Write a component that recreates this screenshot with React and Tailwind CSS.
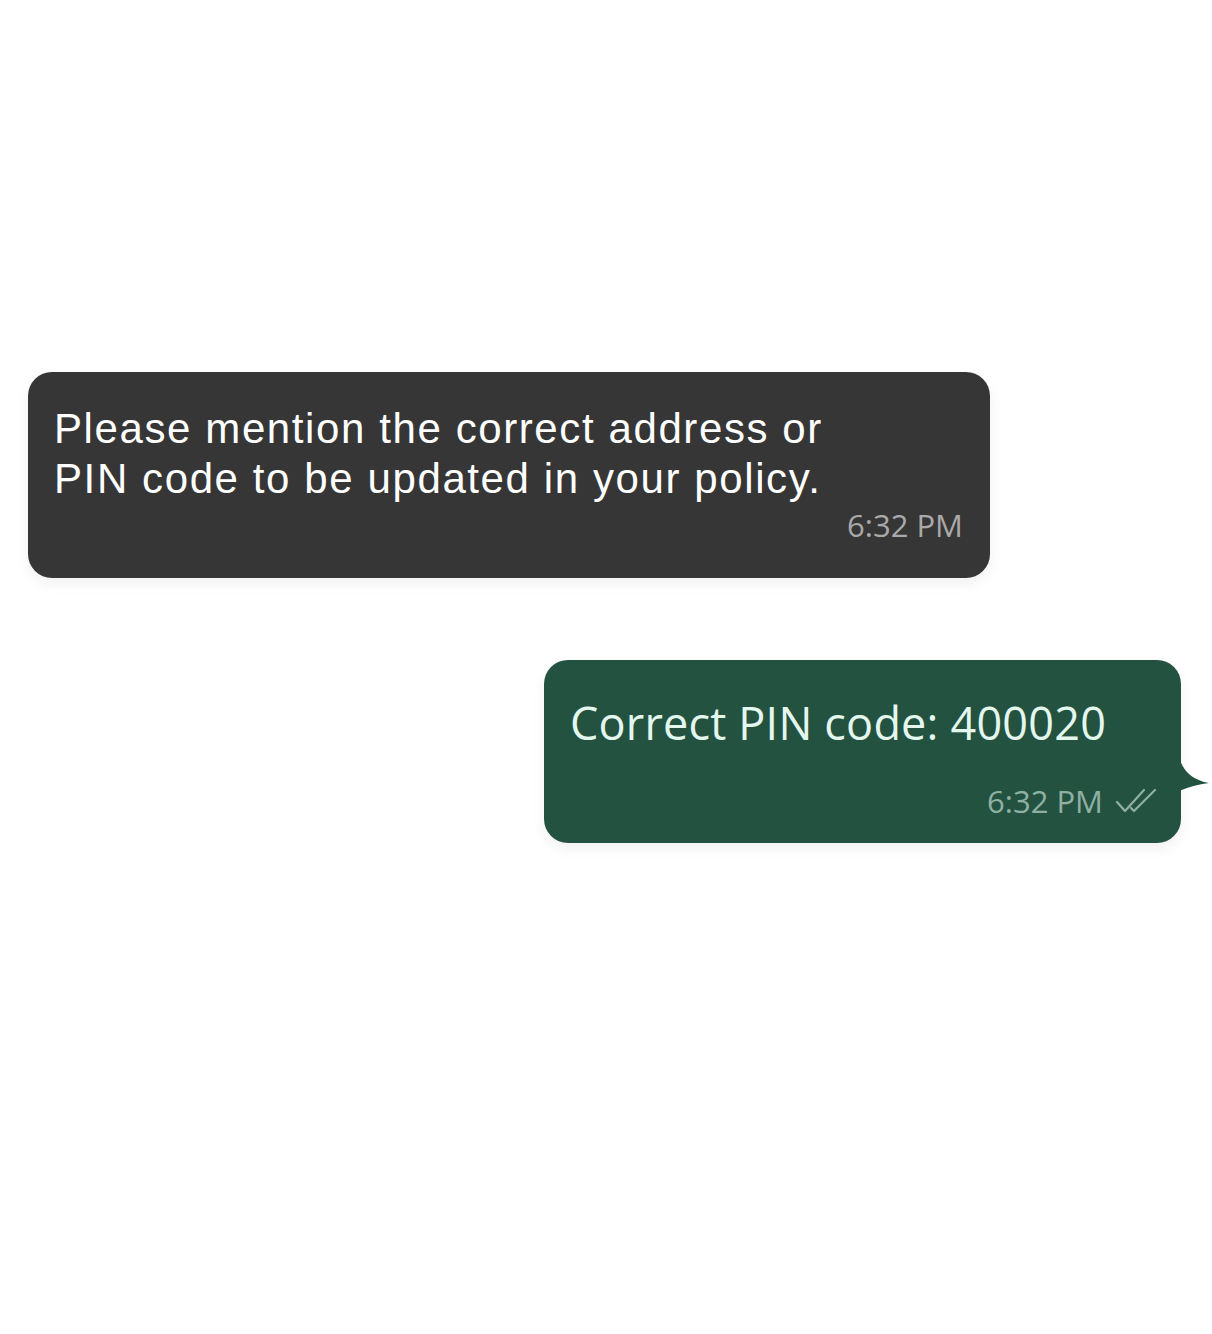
export default function App() {
  return (
    <div className="min-h-[1334px] w-full bg-white flex flex-col pt-[372px]">
      <div className="ml-[28px] w-[962px] rounded-[24px] bg-[#363636] pl-[26px] pr-[27px] pt-[32px] pb-[33px] shadow-[0_6px_14px_rgba(0,0,0,0.06)]">
        <p className="text-[42px] leading-[50px] tracking-[1.6px] text-white font-['Liberation_Sans',Arial,sans-serif]">
          Please mention the correct address or
          <br />
          PIN code to be updated in your policy.
        </p>
        <div className="mt-[1px] flex justify-end">
          <span className="text-[31px] leading-[40px] text-[#a9a9a9] font-['Open_Sans',sans-serif]">6:32 PM</span>
        </div>
      </div>

      <div className="relative self-end mr-[31px] mt-[82px] w-[637px] rounded-[24px] bg-[#245241] pl-[26px] pr-[24px] pt-[35px] pb-[22px] shadow-[0_6px_14px_rgba(0,0,0,0.06)]">
        <p className="text-[45px] leading-[56px] tracking-[0.2px] text-[#e4f7ef] font-['Open_Sans',sans-serif]">
          Correct PIN code: 400020
        </p>
        <div className="mt-[30px] flex items-center justify-end gap-[12px]">
          <span className="text-[31px] leading-[40px] text-[#8fb0a2] font-['Open_Sans',sans-serif]">6:32 PM</span>
          <svg width="42" height="28" viewBox="0 0 42 28" fill="none" stroke="#8fb0a2" strokeWidth="2.2" strokeLinecap="round" strokeLinejoin="round">
            <path d="M2 15 L10 24 L29 3" />
            <path d="M16 21 L19 24 L40 3" />
          </svg>
        </div>
        <svg className="absolute right-[-30px] top-[97px]" width="32" height="36" viewBox="0 0 32 36">
          <path d="M0 0 Q6 22 30 26 Q14 28 0 34 Z" fill="#245241" />
        </svg>
      </div>
    </div>
  );
}
